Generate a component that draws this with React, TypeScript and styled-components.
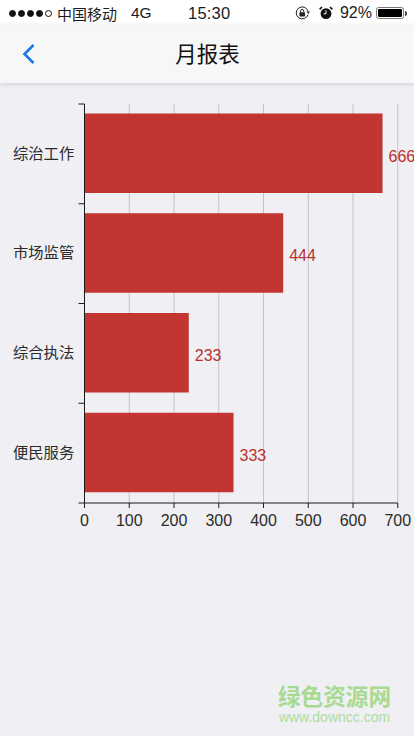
import styled, { createGlobalStyle } from "styled-components";

const data = [
  { name: "综治工作", value: 666 },
  { name: "市场监管", value: 444 },
  { name: "综合执法", value: 233 },
  { name: "便民服务", value: 333 },
];

const xTicks = [0, 100, 200, 300, 400, 500, 600, 700];

/* chart geometry, in px of the svg */
const AXIS_X = 84.5;
const AXIS_TOP = 21;
const AXIS_BOTTOM = 420;
const PER_UNIT = 0.4475;
const BAND = (AXIS_BOTTOM - AXIS_TOP) / data.length;
const BAR_HEIGHT = 79.5;
const CJK = `"Liberation Sans", "Noto Sans CJK SC", sans-serif`;

const GlobalStyle = createGlobalStyle`
  html, body {
    margin: 0;
    padding: 0;
    background: #efeff4;
    font-family: ${CJK};
  }
`;

const Page = styled.div`
  width: 414px;
  height: 736px;
  overflow: hidden;
  display: flex;
  flex-direction: column;
  background: #efeff4;
`;

const StatusBar = styled.div`
  height: 25px;
  flex: none;
  display: flex;
  align-items: center;
  background: #fff;
  color: #1c1c1c;
  font-size: 15.5px;
  padding: 1px 7px 0 9px;
  box-sizing: border-box;
`;

const Signal = styled.div`
  display: flex;
  gap: 2px;
  margin-right: 5px;
`;

const Dot = styled.span<{ $empty?: boolean }>`
  width: 7px;
  height: 7px;
  border-radius: 50%;
  box-sizing: border-box;
  border: 1px solid #111;
  background: ${(p) => (p.$empty ? "transparent" : "#111")};
`;

const Carrier = styled.span`
  font-size: 15px;
  width: 74px;
`;

const Network = styled.span`
  width: 57px;
`;

const Clock = styled.span`
  font-size: 16.5px;
  letter-spacing: 0.2px;
`;

const StatusRight = styled.div`
  margin-left: auto;
  display: flex;
  align-items: center;
`;

const IconGap = styled.span`
  width: 8px;
`;

const Percent = styled.span`
  margin: 0 4px 0 7px;
  font-size: 16px;
`;

const Battery = styled.div`
  width: 28px;
  height: 12px;
  margin-right: 3px;
  box-sizing: border-box;
  border: 1px solid #777;
  border-radius: 2.5px;
  padding: 1px;
  position: relative;
  &::after {
    content: "";
    position: absolute;
    right: -4px;
    top: 2.5px;
    width: 2px;
    height: 5px;
    border-radius: 0 2px 2px 0;
    background: #444;
  }
`;

const BatteryLevel = styled.div`
  height: 100%;
  background: #000;
  border-radius: 1px;
`;

const NavBar = styled.header`
  height: 58px;
  flex: none;
  position: relative;
  display: flex;
  align-items: center;
  justify-content: center;
  background: #f7f7f7;
  box-shadow: 0 1px 5px rgba(0, 0, 0, 0.14);
`;

const BackButton = styled.button`
  position: absolute;
  left: 22px;
  top: 18px;
  padding: 0;
  border: none;
  background: none;
  display: flex;
`;

const Title = styled.h1`
  margin: 0 0 3px 1px;
  font-size: 21.5px;
  font-weight: 400;
  color: #111;
`;

const ChartArea = styled.main`
  flex: none;
`;

const Watermark = styled.div`
  margin-top: auto;
  align-self: flex-end;
  padding: 0 23px 11px 0;
  display: flex;
  flex-direction: column;
  align-items: center;
`;

const MarkName = styled.div`
  font-size: 22.6px;
  line-height: 25px;
  font-weight: 700;
  color: #a8da92;
`;

const MarkUrl = styled.div`
  font-size: 14px;
  line-height: 16px;
  margin-top: -1px;
  color: #aedd9b;
`;

function LockRotation() {
  return (
    <svg width="16" height="14" viewBox="0 0 16 14">
      <path d="M13 8.6A6 6 0 1 1 13 5.2" fill="none" stroke="#222" strokeWidth="1" />
      <path d="M11.4 5.6h3.6L13.2 8z" fill="#222" />
      <rect x="4.4" y="6.2" width="5.6" height="4.2" rx="0.6" fill="#222" />
      <path d="M5.6 6.2V5a1.6 1.6 0 0 1 3.2 0v1.2" fill="none" stroke="#222" strokeWidth="1" />
    </svg>
  );
}

function Alarm() {
  return (
    <svg width="14" height="14" viewBox="0 0 14 14">
      <circle cx="7" cy="7.6" r="5.4" fill="#111" />
      <path d="M7 4.4v3.4H4.6" fill="none" stroke="#fff" strokeWidth="1" />
      <path d="M0.6 3.4 3 1M13.4 3.4 11 1" stroke="#111" strokeWidth="1.6" />
    </svg>
  );
}

function BarChart() {
  return (
    <svg width="414" height="450" style={{ display: "block" }}>
      {xTicks.slice(1).map((t) => {
        const x = AXIS_X + t * PER_UNIT;
        return <line key={t} x1={x} x2={x} y1={AXIS_TOP} y2={AXIS_BOTTOM} stroke="#c4c4c6" />;
      })}

      {data.map((d, i) => {
        const y = AXIS_TOP + i * BAND + 9.5;
        const w = d.value * PER_UNIT;
        return (
          <g key={d.name}>
            <rect x={AXIS_X} y={y} width={w} height={BAR_HEIGHT} fill="#c23531" />
            <text x={13} y={y + 45} fontSize="15.3" fill="#2b2b2b" fontFamily={CJK}>
              {d.name}
            </text>
            <text x={AXIS_X + w + 6} y={y + 48} fontSize="16" fill="#bb2f2c" fontFamily={CJK}>
              {d.value}
            </text>
          </g>
        );
      })}

      <line x1={AXIS_X} x2={AXIS_X} y1={AXIS_TOP} y2={AXIS_BOTTOM + 5} stroke="#1a1a1a" />
      <line x1={AXIS_X - 6} x2={AXIS_X + 700 * PER_UNIT} y1={AXIS_BOTTOM} y2={AXIS_BOTTOM} stroke="#1a1a1a" />
      {data.map((_, i) => {
        const y = AXIS_TOP + i * BAND;
        return <line key={i} x1={AXIS_X - 6} x2={AXIS_X} y1={y} y2={y} stroke="#1a1a1a" />;
      })}
      {xTicks.map((t) => {
        const x = AXIS_X + t * PER_UNIT;
        return (
          <g key={t}>
            <line x1={x} x2={x} y1={AXIS_BOTTOM} y2={AXIS_BOTTOM + 5} stroke="#1a1a1a" />
            <text x={x} y={AXIS_BOTTOM + 23} fontSize="16" fill="#2b2b2b" textAnchor="middle" fontFamily={CJK}>
              {t}
            </text>
          </g>
        );
      })}
    </svg>
  );
}

export default function App() {
  return (
    <Page>
      <GlobalStyle />
      <StatusBar>
        <Signal>
          <Dot />
          <Dot />
          <Dot />
          <Dot />
          <Dot $empty />
        </Signal>
        <Carrier>中国移动</Carrier>
        <Network>4G</Network>
        <Clock>15:30</Clock>
        <StatusRight>
          <LockRotation />
          <IconGap />
          <Alarm />
          <Percent>92%</Percent>
          <Battery>
            <BatteryLevel />
          </Battery>
        </StatusRight>
      </StatusBar>
      <NavBar>
        <BackButton aria-label="返回">
          <svg width="14" height="22" viewBox="0 0 14 22">
            <path d="M11.5 2 2.5 11l9 9" fill="none" stroke="#1a7ae6" strokeWidth="2.6" />
          </svg>
        </BackButton>
        <Title>月报表</Title>
      </NavBar>
      <ChartArea>
        <BarChart />
      </ChartArea>
      <Watermark>
        <MarkName>绿色资源网</MarkName>
        <MarkUrl>www.downcc.com</MarkUrl>
      </Watermark>
    </Page>
  );
}
